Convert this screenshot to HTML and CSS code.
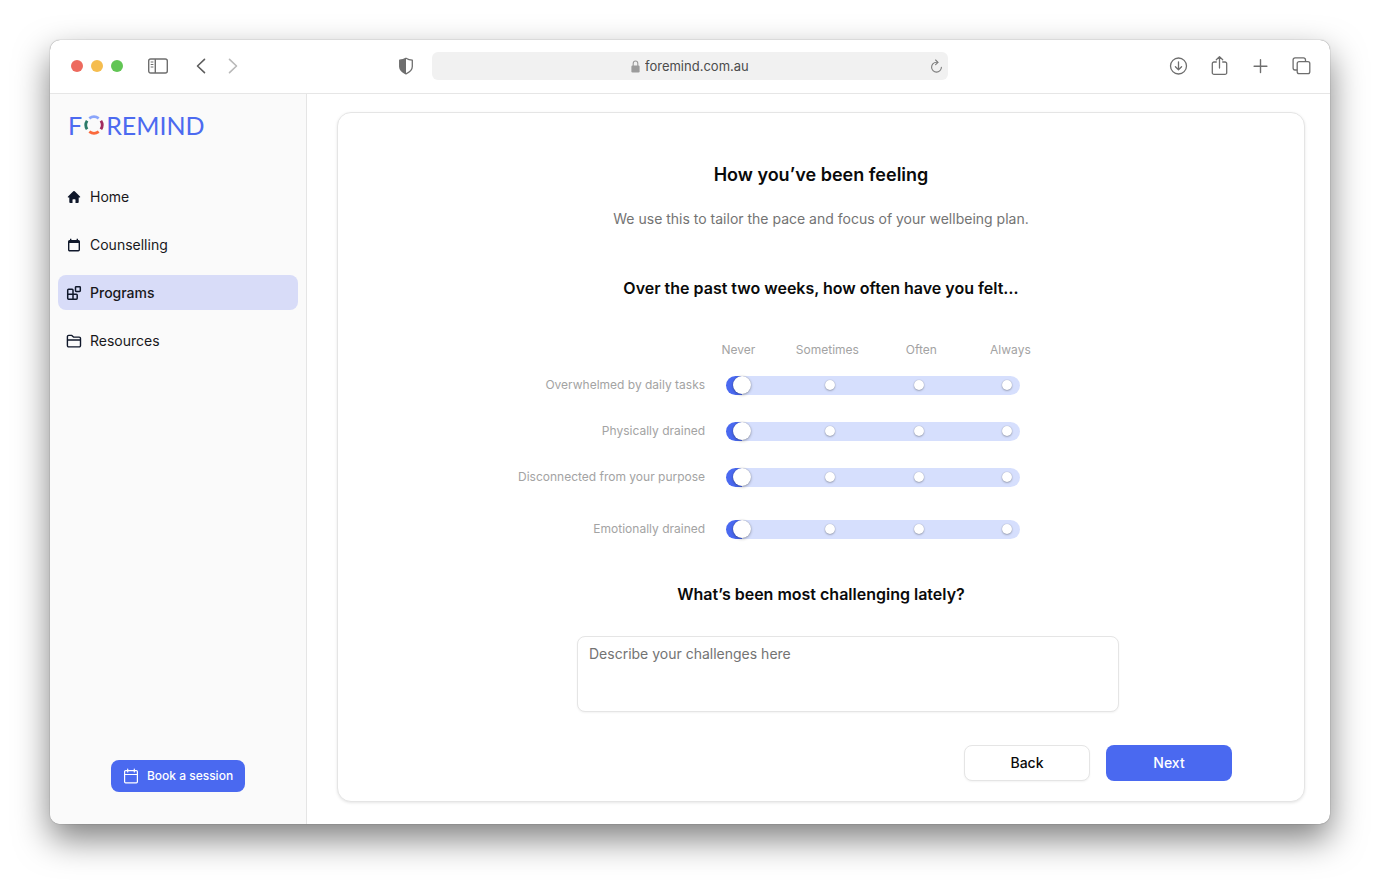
FILE: index.html
```html
<!DOCTYPE html>
<html lang="en">
<head>
<meta charset="utf-8">
<meta name="viewport" content="width=device-width, initial-scale=1">
<title>Foremind – Programs</title>
<link rel="stylesheet" href="styles.css">
</head>
<body>
<div class="window">
  <header class="toolbar">
    <div class="toolbar-side">
      <div class="lights">
        <span class="light light-close"></span>
        <span class="light light-min"></span>
        <span class="light light-max"></span>
      </div>
      <button class="tool tool-sidebar" type="button" aria-label="Show sidebar">
        <svg width="22" height="18" viewBox="0 0 22 18" fill="none" stroke="#6e6e6e" stroke-width="1.4"><rect x="1.7" y="2" width="18.6" height="14" rx="2"/><path d="M8.3 2v14"/><path d="M3.7 5h2.7M3.7 7.5h2.7M3.7 10h2.7" stroke-width="1"/></svg>
      </button>
      <button class="tool tool-back" type="button" aria-label="Go back">
        <svg width="12" height="18" viewBox="0 0 12 18" fill="none" stroke="#5e5e5e" stroke-width="1.6" stroke-linecap="round" stroke-linejoin="round"><path d="M9.5 2.3 2.5 9l7 6.7"/></svg>
      </button>
      <button class="tool tool-forward" type="button" aria-label="Go forward">
        <svg width="12" height="18" viewBox="0 0 12 18" fill="none" stroke="#b9b9b9" stroke-width="1.6" stroke-linecap="round" stroke-linejoin="round"><path d="M2.5 2.3 9.5 9l-7 6.7"/></svg>
      </button>
      <button class="tool tool-shield" type="button" aria-label="Privacy report">
        <svg width="16" height="18" viewBox="0 0 16 18"><path d="M8 1.2C6 2.4 4 3 1.7 3.2v6.3C1.700 13 4.500 15.200 8 16.800c3.500-1.600 6.300-3.800 6.300-7.300V3.200C12 3 10 2.400 8 1.200Z" fill="none" stroke="#6e6e6e" stroke-width="1.3" stroke-linejoin="round"/><path d="M8 1.200C6 2.400 4 3 1.700 3.200v6.300c0 3.500 2.800 5.700 6.300 7.300Z" fill="#6e6e6e"/></svg>
      </button>
    </div>
    <div class="address">
      <label class="address-main">
        <svg width="9" height="13" viewBox="0 0 9 13"><path d="M2.200 6V3.600a2.300 2.600 0 0 1 4.600 0V6" fill="none" stroke="#9b9b9b" stroke-width="1.1"/><rect x=".4" y="5.600" width="8.200" height="6.800" rx="1.200" fill="#9b9b9b"/></svg>
        <input class="address-input" type="text" value="foremind.com.au" aria-label="Address">
      </label>
      <button class="tool" type="button" aria-label="Reload">
        <svg width="13" height="15" viewBox="0 0 13 15" fill="none" stroke="#7c7c7c" stroke-width="1.1" stroke-linecap="round" stroke-linejoin="round"><path d="M11.400 8.200a4.900 4.900 0 1 1-4.900-4.900h1.300"/><path d="M5.600 1 8 3.300 5.600 5.700"/></svg>
      </button>
    </div>
    <div class="toolbar-side toolbar-end">
      <button class="tool" type="button" aria-label="Downloads">
        <svg width="19" height="22" viewBox="0 0 19 22" fill="none" stroke="#6e6e6e" stroke-width="1.300" stroke-linecap="round" stroke-linejoin="round"><circle cx="9.500" cy="11" r="8"/><path d="M9.500 6.800v7.800M6.400 11.700l3.100 3.100 3.100-3.100"/></svg>
      </button>
      <button class="tool" type="button" aria-label="Share">
        <svg width="19" height="22" viewBox="0 0 19 22" fill="none" stroke="#6e6e6e" stroke-width="1.300" stroke-linecap="round" stroke-linejoin="round"><path d="M6.300 7H4a1.700 1.700 0 0 0-1.700 1.700v9A1.700 1.700 0 0 0 4 19.400h11a1.700 1.700 0 0 0 1.700-1.700v-9A1.700 1.700 0 0 0 15 7h-2.300M9.500 13V1.800M6.300 4.800l3.200-3.200 3.200 3.200"/></svg>
      </button>
      <button class="tool" type="button" aria-label="New tab">
        <svg width="19" height="22" viewBox="0 0 19 22" fill="none" stroke="#6e6e6e" stroke-width="1.400" stroke-linecap="round"><path d="M9.500 4.800v12.800M3.100 11.200h12.800"/></svg>
      </button>
      <button class="tool" type="button" aria-label="Tab overview">
        <svg width="19" height="22" viewBox="0 0 19 22" fill="none" stroke="#6e6e6e" stroke-width="1.300" stroke-linejoin="round"><rect x="5.200" y="6.700" width="12.600" height="12" rx="1.900"/><path d="M5.200 15H3a1.900 1.900 0 0 1-1.900-1.900V4.800A1.900 1.900 0 0 1 3 2.900h8.600a1.900 1.900 0 0 1 1.900 1.900v1.900"/></svg>
      </button>
    </div>
  </header>

  <div class="app">
    <aside class="sidebar">
      <a class="logo" href="#" aria-label="Foremind">
        <span>F</span>
        <svg width="20" height="20" viewBox="0 0 20 20" fill="none" stroke-width="2.800"><path d="M5.300 3.300A8 8 0 0 1 14.700 3.300" stroke="#8aa5fb"/><path d="M16.900 5.700a8 8 0 0 1 0 8.600" stroke="#a12a5e"/><path d="M14.700 16.700a8 8 0 0 1-9.400 0" stroke="#fb6a3c"/><path d="M3.100 14.300a8 8 0 0 1 0-8.600" stroke="#2b7a68"/></svg>
        <span>REMIND</span>
      </a>
      <nav class="nav">
        <a class="nav-item" href="#">
          <svg width="16" height="16" viewBox="0 0 16 16" fill="#0f172a"><path d="M7.300 2.300a1 1 0 0 1 1.400 0l5.300 5.200c.4.400.2 1-.4 1h-.9v4.600a.9.900 0 0 1-.9.900H9.500v-3.200a.6.600 0 0 0-.6-.6H7.100a.6.600 0 0 0-.6.600V14H4.200a.9.900 0 0 1-.9-.9V8.500h-.9c-.6 0-.8-.6-.4-1Z"/></svg>
          Home
        </a>
        <a class="nav-item" href="#">
          <svg width="16" height="16" viewBox="0 0 16 16" fill="none" stroke="#0f172a" stroke-width="1.400"><rect x="2.700" y="3.700" width="10.600" height="10" rx="1"/><path d="M2.700 4.900h10.600" stroke-width="2.200"/><path d="M4.700 1.700v2.500M11.300 1.700v2.500"/></svg>
          Counselling
        </a>
        <a class="nav-item nav-item-active" href="#" aria-current="page">
          <svg width="16" height="16" viewBox="0 0 16 16" fill="none" stroke="#0f172a" stroke-width="1.500" stroke-linejoin="round"><path d="M7 14.200V5.200a.9.900 0 0 0-.9-.9H2.600a.9.900 0 0 0-.9.900v8.100a.9.900 0 0 0 .9.900h7.700a.9.900 0 0 0 .9-.9V10.100a.9.900 0 0 0-.9-.9H1.700"/><rect x="9.500" y="1.700" width="4.800" height="4.800" rx=".7"/></svg>
          Programs
        </a>
        <a class="nav-item" href="#">
          <svg width="16" height="16" viewBox="0 0 16 16" fill="none" stroke="#0f172a" stroke-width="1.400" stroke-linejoin="round"><path d="M1.400 12.600V3.700a1.300 1.300 0 0 1 1.300-1.300h3.100l1.700 1.700h5.700a1.300 1.300 0 0 1 1.300 1.300v7.200a1.300 1.300 0 0 1-1.300 1.300H2.700a1.300 1.300 0 0 1-1.300-1.300ZM1.400 7h13.100"/></svg>
          Resources
        </a>
      </nav>
      <button class="btn btn-primary btn-book" type="button">
        <svg width="16" height="16" viewBox="0 0 16 16" fill="none" stroke="#fff" stroke-width="1.200" stroke-linecap="round"><rect x="1.600" y="2.600" width="12.800" height="12.200" rx="1"/><path d="M1.600 6.500h12.800M4.700 1v3M11.300 1v3"/></svg>
        Book a session
      </button>
    </aside>

    <main class="main">
      <form class="card">
        <h1 class="title">How you’ve been feeling</h1>
        <p class="subtitle">We use this to tailor the pace and focus of your wellbeing plan.</p>
        <h2 class="question">Over the past two weeks, how often have you felt…</h2>

        <div class="scale">
          <div class="scale-head">
            <span>Never</span><span>Sometimes</span><span>Often</span><span>Always</span>
          </div>
          <div class="scale-group">
            <div class="scale-row">
              <label for="overwhelmed">Overwhelmed by daily tasks</label>
              <div class="slider"><div class="dots"><i></i><i></i><i></i><i></i></div><input id="overwhelmed" type="range" min="0" max="3" step="1" value="0"></div>
            </div>
            <div class="scale-row">
              <label for="physical">Physically drained</label>
              <div class="slider"><div class="dots"><i></i><i></i><i></i><i></i></div><input id="physical" type="range" min="0" max="3" step="1" value="0"></div>
            </div>
            <div class="scale-row">
              <label for="disconnected">Disconnected from your purpose</label>
              <div class="slider"><div class="dots"><i></i><i></i><i></i><i></i></div><input id="disconnected" type="range" min="0" max="3" step="1" value="0"></div>
            </div>
          </div>
          <div class="scale-group">
            <div class="scale-row">
              <label for="emotional">Emotionally drained</label>
              <div class="slider"><div class="dots"><i></i><i></i><i></i><i></i></div><input id="emotional" type="range" min="0" max="3" step="1" value="0"></div>
            </div>
          </div>
        </div>

        <label class="question" for="challenges">What’s been most challenging lately?</label>
        <div class="field">
          <textarea id="challenges" class="textarea" placeholder="Describe your challenges here"></textarea>
        </div>
        <div class="actions">
          <button class="btn btn-outline" type="button">Back</button>
          <button class="btn btn-primary" type="button">Next</button>
        </div>
      </form>
    </main>
  </div>
</div>
</body>
</html>
```

FILE: styles.css
```css
* {
  box-sizing: border-box;
}

body {
  margin: 0;
  min-height: 100vh;
  padding: 40px 50px 60px;
  display: flex;
  background: #fff;
  color: #0a0a0a;
  font: 14px/20px Inter, "Liberation Sans", sans-serif;
}

button,
input,
textarea {
  font: inherit;
  color: inherit;
}

svg {
  display: block;
  flex: none;
}

.window {
  flex: 1;
  min-width: 0;
  display: flex;
  flex-direction: column;
  overflow: hidden;
  border-radius: 10px;
  background: #fff;
  box-shadow: 0 0 1px rgba(0, 0, 0, 0.6), 0 15px 34px rgba(0, 0, 0, 0.5);
}

/* Browser toolbar */

.toolbar {
  display: flex;
  align-items: center;
  height: 54px;
  flex: none;
  padding: 0 19px 1px;
  border-bottom: 1px solid #e6e6e6;
}

.toolbar-side {
  flex: 1;
  display: flex;
  align-items: center;
}

.toolbar-end {
  justify-content: flex-end;
  gap: 22px;
}

.lights {
  display: flex;
  gap: 8px;
  padding-left: 2px;
}

.light {
  width: 12px;
  height: 12px;
  border-radius: 50%;
}

.light-close { background: #ed6a5e; }
.light-min { background: #f5bd4f; }
.light-max { background: #61c554; }

.tool {
  padding: 0;
  border: 0;
  background: none;
}

.tool-sidebar { margin-left: 24px; }
.tool-back { margin-left: 26px; }
.tool-forward { margin-left: 20px; }

.tool-shield {
  margin-left: auto;
  margin-right: 18px;
}

.address {
  flex: 0 1 516px;
  display: flex;
  align-items: center;
  height: 28px;
  padding-right: 5px;
  border-radius: 6px;
  background: #f1f1f1;
}

.address-main {
  flex: 1;
  display: flex;
  align-items: center;
  justify-content: center;
  gap: 5px;
  padding-left: 18px;
}

.address-input {
  width: 104px;
  padding: 0;
  border: 0;
  outline: 0;
  background: none;
  color: #4c4c4c;
  font-size: 13px;
}

/* App shell */

.app {
  flex: 1;
  display: flex;
}

.sidebar {
  flex: 0 0 257px;
  display: flex;
  flex-direction: column;
  padding: 18px 8px 32px;
  border-right: 1px solid #e5e5e5;
  background: #fafafa;
}

.logo {
  display: flex;
  align-items: center;
  gap: 2px;
  height: 26px;
  padding-left: 10px;
  color: #4c6af0;
  font: 25px/26px Lato, sans-serif;
  text-decoration: none;
}

.nav {
  display: flex;
  flex-direction: column;
  gap: 13px;
  margin-top: 41px;
}

.nav-item {
  display: flex;
  align-items: center;
  gap: 8px;
  height: 35px;
  padding: 0 8px;
  border-radius: 8px;
  color: #18181b;
  text-decoration: none;
}

.nav-item-active {
  background: #d8dcf8;
  font-weight: 500;
}

.btn {
  display: flex;
  align-items: center;
  justify-content: center;
  width: 126px;
  height: 36px;
  border: 1px solid transparent;
  border-radius: 8px;
  font-weight: 500;
}

.btn-primary {
  background: #4a69f0;
  color: #fff;
}

.btn-outline {
  border-color: #e5e5e5;
  background: #fff;
  box-shadow: 0 1px 2px rgba(0, 0, 0, 0.05);
}

.btn-book {
  gap: 8px;
  width: auto;
  height: 32px;
  margin: auto auto 0;
  padding: 0 11px;
  font-size: 12px;
}

.main {
  flex: 1;
  min-width: 0;
  display: flex;
  padding: 18px 25px 22px 30px;
}

.card {
  flex: 1;
  min-width: 0;
  padding: 48px 0 20px;
  border: 1px solid #e5e5e5;
  border-radius: 14px;
  background: #fff;
  box-shadow: 0 1px 3px rgba(0, 0, 0, 0.1);
}

.title {
  margin: 0;
  font-size: 18px;
  line-height: 28px;
  font-weight: 600;
  text-align: center;
}

.subtitle {
  margin: 20px 0 0;
  color: #737373;
  text-align: center;
}

.question {
  display: block;
  margin: 47px 0 0;
  font-size: 16px;
  line-height: 24px;
  font-weight: 600;
  text-align: center;
}

/* Frequency scale */

.scale {
  margin-top: 40px;
  color: #a3a3a3;
  font-size: 12px;
}

.scale-head {
  display: grid;
  grid-template-columns: 86px 92px 96px 82px;
  padding-left: 37%;
  text-align: center;
}

.scale-group {
  display: grid;
  gap: 27px;
  margin-top: 15px;
}

.scale-group + .scale-group {
  margin-top: 33px;
}

.scale-row {
  display: grid;
  grid-template-columns: 38% 294px;
  column-gap: 21px;
  align-items: center;
  height: 19px;
  text-align: right;
}

.slider {
  display: grid;
  height: 19px;
  padding: 0 4px 0 7px;
  border-radius: 10px;
  background: linear-gradient(to right, #4a69f0 16px, #d6dffd 16px);
}

.dots,
.slider input {
  grid-area: 1 / 1;
}

.dots {
  display: flex;
  align-items: center;
  justify-content: space-between;
  padding: 0 4px;
}

.dots i {
  width: 10px;
  height: 10px;
  border-radius: 50%;
  background: #fff;
  box-shadow: 0 0 1px rgba(0, 0, 0, 0.3), 0 1px 2px rgba(0, 0, 0, 0.25);
}

.slider input {
  appearance: none;
  width: 100%;
  height: 19px;
  margin: 0;
  background: none;
}

.slider input::-webkit-slider-thumb {
  appearance: none;
  width: 18px;
  height: 18px;
  border: 0;
  border-radius: 50%;
  background: #fff;
  box-shadow: 0 0 1px rgba(0, 0, 0, 0.3), 0 1px 3px rgba(0, 0, 0, 0.3);
}

.scale + .question {
  margin-top: 44px;
}

.field {
  display: flex;
  justify-content: center;
  margin-top: 30px;
  padding-left: 54px;
}

.textarea {
  width: 542px;
  height: 76px;
  padding: 7px 11px;
  border: 1px solid #e5e5e5;
  border-radius: 8px;
  background: #fff;
  box-shadow: 0 1px 2px rgba(0, 0, 0, 0.05);
  resize: none;
}

.textarea::placeholder {
  color: #737373;
}

.actions {
  display: flex;
  justify-content: flex-end;
  gap: 16px;
  margin-top: 33px;
  padding-right: 72px;
}
```
